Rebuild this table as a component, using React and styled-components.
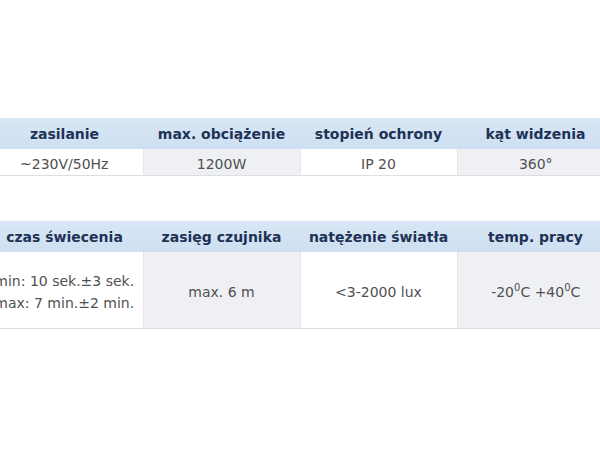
import styled, { createGlobalStyle } from "styled-components";

const GlobalStyle = createGlobalStyle`
  html, body {
    margin: 0;
    padding: 0;
    background: #ffffff;
    overflow: hidden;
  }
  body {
    font-family: "DejaVu Sans", Verdana, sans-serif;
  }
`;

const SPECS_POWER = [
  { label: "zasilanie", value: ["~230V/50Hz"] },
  { label: "max. obciążenie", value: ["1200W"] },
  { label: "stopień ochrony", value: ["IP 20"] },
  { label: "kąt widzenia", value: ["360°"] },
];

const SPECS_SENSOR = [
  { label: "czas świecenia", value: ["min: 10 sek.±3 sek.", "max: 7 min.±2 min."] },
  { label: "zasięg czujnika", value: ["max. 6 m"] },
  { label: "natężenie światła", value: ["<3-2000 lux"] },
  { label: "temp. pracy", value: [<>-20<sup>0</sup>C +40<sup>0</sup>C</>] },
];

const SpecTable = ({ specs, rowHeight }) => {
  return (
    <Table>
      <colgroup>
        {specs.map((s) => (
          <col key={s.label} style={{ width: "157px" }} />
        ))}
      </colgroup>
      <thead>
        <tr>
          {specs.map((s) => (
            <HeadCell key={s.label}>{s.label}</HeadCell>
          ))}
        </tr>
      </thead>
      <tbody>
        <tr>
          {specs.map((s, i) => (
            <DataCell key={s.label} $shaded={i % 2 === 1} $height={rowHeight}>
              {s.value.map((line, j) => (
                <Line key={j}>{line}</Line>
              ))}
            </DataCell>
          ))}
        </tr>
      </tbody>
    </Table>
  );
};

export default function App() {
  return (
    <Page>
      <GlobalStyle />
      <SpecTable specs={SPECS_POWER} rowHeight={26} />
      <SpecTable specs={SPECS_SENSOR} rowHeight={76} />
    </Page>
  );
}

const Page = styled.div`
  width: 600px;
  height: 451px;
  padding-top: 118px;
  box-sizing: border-box;
  display: flex;
  flex-direction: column;
  gap: 45px;
  overflow: hidden;
`;

const Table = styled.table`
  width: 628px;
  margin-left: -14px;
  border-collapse: collapse;
  table-layout: fixed;
  border-bottom: 1px solid #dcdee2;
`;

const HeadCell = styled.th`
  height: 31px;
  padding: 0;
  line-height: 16px;
  background: linear-gradient(#d9e7f5, #cddff1);
  color: #1e3256;
  font-size: 14px;
  font-weight: bold;
  text-align: center;
  vertical-align: middle;
  white-space: nowrap;
`;

const DataCell = styled.td`
  height: ${(p) => p.$height - 3}px;
  padding: 3px 0 0;
  line-height: 16px;
  background: ${(p) => (p.$shaded ? "#eef0f3" : "#ffffff")};
  border-left: 1px solid #e4e6ea;
  color: #505050;
  font-size: 14px;
  text-align: center;
  vertical-align: middle;
  white-space: nowrap;

  &:first-child {
    border-left: none;
  }

  sup {
    font-size: 10px;
    line-height: 0;
  }
`;

const Line = styled.div`
  & + & {
    margin-top: 6px;
  }
`;
